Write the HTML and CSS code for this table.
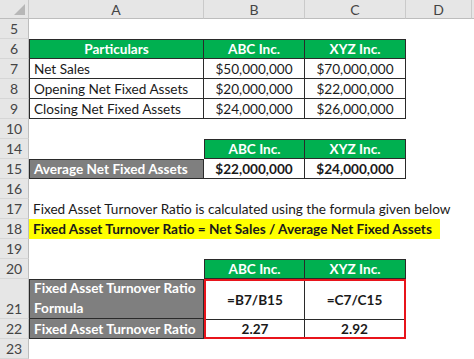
FILE: index.html
```html
<!DOCTYPE html>
<html>
<head>
<meta charset="utf-8">
<link rel="stylesheet" href="styles.css">
</head>
<body>
<div class="sheet">
  <!-- header -->
  <div class="corner"><svg class="tri" width="12" height="12" viewBox="0 0 12 12"><polygon points="11,0 11,11 0,11" fill="#b7b7b7"/></svg></div>
  <div class="colh">A</div><div class="colh">B</div><div class="colh">C</div><div class="colh">D</div><div class="colh end"></div>

  <!-- row 5 -->
  <div class="rowh">5</div><div class="c"></div><div class="c"></div><div class="c"></div><div class="c"></div><div class="c"></div>
  <!-- row 6 -->
  <div class="rowh">6</div><div class="c th first top">Particulars</div><div class="c th top">ABC Inc.</div><div class="c th top">XYZ Inc.</div><div class="c"></div><div class="c"></div>
  <!-- row 7 -->
  <div class="rowh">7</div><div class="c td first">Net Sales</div><div class="c td num">$50,000,000</div><div class="c td num">$70,000,000</div><div class="c"></div><div class="c"></div>
  <!-- row 8 -->
  <div class="rowh">8</div><div class="c td first">Opening Net Fixed Assets</div><div class="c td num">$20,000,000</div><div class="c td num">$22,000,000</div><div class="c"></div><div class="c"></div>
  <!-- row 9 -->
  <div class="rowh">9</div><div class="c td first">Closing Net Fixed Assets</div><div class="c td num">$24,000,000</div><div class="c td num">$26,000,000</div><div class="c"></div><div class="c"></div>
  <!-- row 10 -->
  <div class="rowh">10</div><div class="c"></div><div class="c"></div><div class="c"></div><div class="c"></div><div class="c"></div>
  <!-- row 14 -->
  <div class="rowh">14</div><div class="c"></div><div class="c th top leftb">ABC Inc.</div><div class="c th top">XYZ Inc.</div><div class="c"></div><div class="c"></div>
  <!-- row 15 -->
  <div class="rowh">15</div><div class="c gl first topb">Average Net Fixed Assets</div><div class="c td num b">$22,000,000</div><div class="c td num b">$24,000,000</div><div class="c"></div><div class="c"></div>
  <!-- row 16 -->
  <div class="rowh">16</div><div class="c"></div><div class="c"></div><div class="c"></div><div class="c"></div><div class="c"></div>
  <!-- row 17 -->
  <div class="rowh">17</div><div class="c over">Fixed Asset Turnover Ratio is calculated using the formula given below</div><div class="c"></div><div class="c"></div><div class="c"></div><div class="c"></div>
  <!-- row 18 -->
  <div class="rowh">18</div><div class="c over nopad"><span class="hl">Fixed Asset Turnover Ratio = Net Sales / Average Net Fixed Assets</span></div><div class="c"></div><div class="c"></div><div class="c"></div><div class="c"></div>
  <!-- row 19 -->
  <div class="rowh">19</div><div class="c"></div><div class="c"></div><div class="c"></div><div class="c"></div><div class="c"></div>
  <!-- row 20 -->
  <div class="rowh">20</div><div class="c"></div><div class="c th top leftb">ABC Inc.</div><div class="c th top">XYZ Inc.</div><div class="c"></div><div class="c"></div>
  <!-- row 21 -->
  <div class="rowh bottom">21</div><div class="c gl first topb wrap">Fixed Asset Turnover Ratio Formula</div>
  <div class="redbox">
    <div class="rc rc1">=B7/B15</div><div class="rc rc2">=C7/C15</div>
    <div class="rc rc3">2.27</div><div class="rc rc4">2.92</div>
  </div>
  <div class="c"></div><div class="c"></div>
  <!-- row 22 -->
  <div class="rowh">22</div><div class="c gl first">Fixed Asset Turnover Ratio</div><div class="c"></div><div class="c"></div>
  <!-- row 23 -->
  <div class="rowh">23</div><div class="c"></div><div class="c"></div><div class="c"></div><div class="c"></div><div class="c"></div>
</div>
</body>
</html>
```
FILE: styles.css
```css
* { box-sizing: border-box; }
html, body { margin: 0; padding: 0; background: #ffffff; }
body { width: 474px; height: 359px; overflow: hidden; }

.sheet {
  display: grid;
  grid-template-columns: 29px 175px 101px 101px 66px 2px;
  grid-template-rows: 19px repeat(13, 20px) 40px 20px 20px;
  font-family: "Lato", "Open Sans", sans-serif;
  font-size: 13.6px;
  color: #1a1a1a;
}

.corner {
  background: #e6e6e6;
  border-right: 1px solid #c8c8c8;
  border-bottom: 1px solid #bdbdbd;
  position: relative;
}
.tri { position: absolute; left: 14px; top: 4px; }

.colh {
  background: #e6e6e6;
  border-right: 1px solid #cacaca;
  border-bottom: 1px solid #bdbdbd;
  color: #444;
  font-size: 14px;
  display: flex;
  align-items: center;
  justify-content: center;
  padding-top: 1px;
}
.colh.end { border-right: none; }

.rowh {
  background: #e6e6e6;
  border-right: 1px solid #bdbdbd;
  border-bottom: 1px solid #d6d6d6;
  color: #444;
  font-size: 14px;
  display: flex;
  align-items: center;
  justify-content: center;
}
.rowh.bottom { align-items: flex-end; padding-bottom: 1px; }

.c {
  display: flex;
  align-items: center;
  white-space: nowrap;
  min-width: 0;
}

.th {
  background: #00b050;
  color: #ffffff;
  font-weight: 700;
  justify-content: center;
  border-right: 1px solid #2a2a2a;
  border-bottom: 1px solid #2a2a2a;
}
.th.top { border-top: 1px solid #2a2a2a; }
.leftb { border-left: 1px solid #2a2a2a; }

.td {
  border-right: 1px solid #2a2a2a;
  border-bottom: 1px solid #2a2a2a;
  padding-left: 4px;
}
.first { border-left: 1px solid #2a2a2a; }
.num { justify-content: center; padding-left: 0; }
.b { font-weight: 700; }

.gl {
  background: #7f7f7f;
  color: #ffffff;
  font-weight: 700;
  padding-left: 4px;
  border-right: 1px solid #2a2a2a;
  border-bottom: 1px solid #2a2a2a;
}
.topb { border-top: 1px solid #2a2a2a; }
.wrap { white-space: normal; line-height: 20px; align-items: flex-end; padding-right: 2px; padding-bottom: 0; }

.over { overflow: visible; padding-left: 4px; }
.nopad { padding-left: 0; }

.hl {
  display: flex;
  align-items: center;
  height: 20px;
  width: 411px;
  flex: none;
  background: #ffff00;
  font-weight: 700;
  padding-left: 4px;
}

.redbox {
  grid-column: 3 / 5;
  grid-row: 15 / 17;
  border: 2px solid #e8141b;
  display: grid;
  grid-template-columns: 1fr 1fr;
  grid-template-rows: 39px 1fr;
  font-weight: 700;
}
.rc {
  display: flex;
  align-items: center;
  justify-content: center;
}
.rc1, .rc3 { border-right: 1px solid #2a2a2a; }
.rc1, .rc2 { border-bottom: 1px solid #2a2a2a; }
```
